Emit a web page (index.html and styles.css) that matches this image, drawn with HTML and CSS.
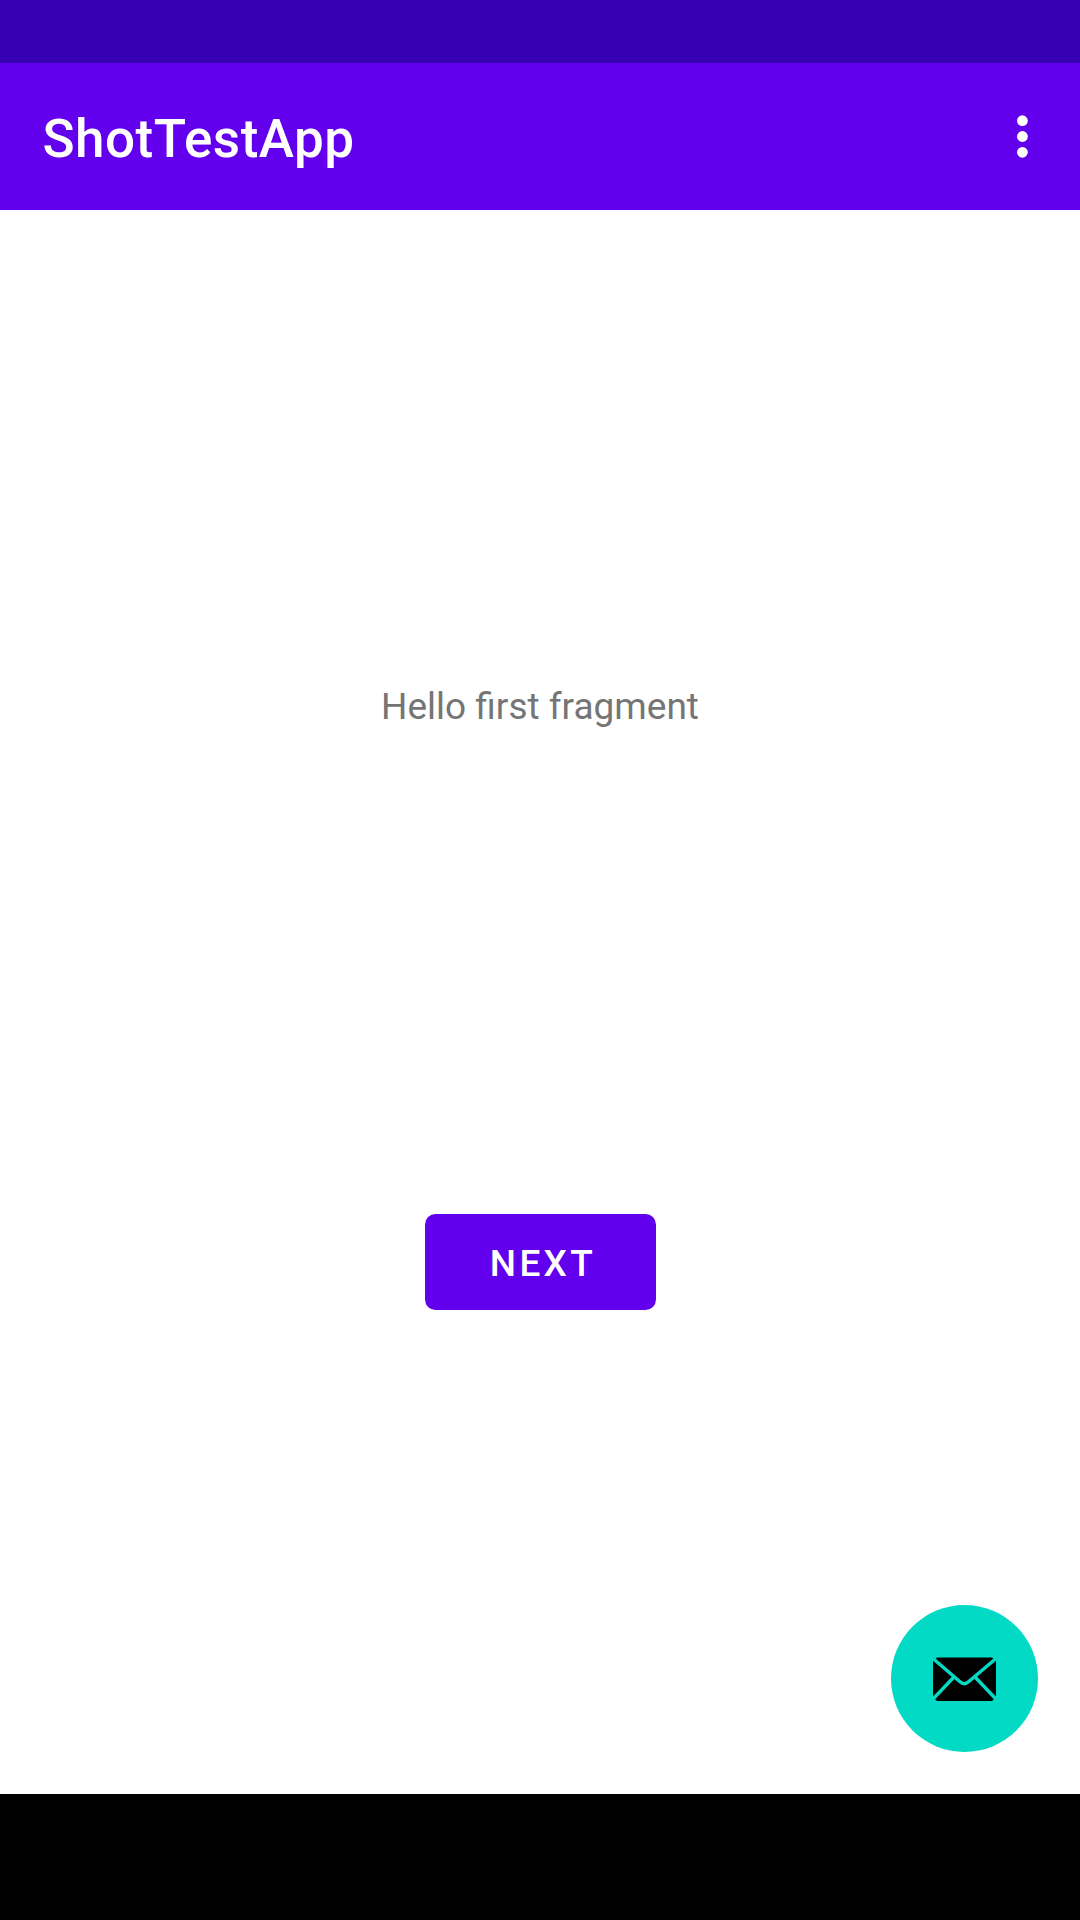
FILE: index.html
```html
<!DOCTYPE html>
<html lang="en">
<head>
<meta charset="utf-8">
<title>ShotTestApp</title>
<link rel="stylesheet" href="styles.css">
</head>
<body>
<div class="status-bar"></div>
<header class="toolbar">
  <h1 class="title">ShotTestApp</h1>
  <button class="overflow" aria-label="More options">
    <svg width="12" height="44" viewBox="0 0 12 44"><g fill="#fff"><circle cx="5.400" cy="5.700" r="5.400"/><circle cx="5.400" cy="21.500" r="5.400"/><circle cx="5.400" cy="37.300" r="5.400"/></g></svg>
  </button>
</header>
<main class="content">
  <p class="message">Hello first fragment</p>
  <button class="next">NEXT</button>
  <button class="fab" aria-label="Send mail">
    <svg width="63" height="44" viewBox="0 0 63 44"><path d="M4 .6H59L63 4V40L59 44H4L0 40V4Z"/><path d="M0 1.500L27 24.800Q31.300 28.500 35.500 24.800L63 1.500M0 42L20.500 20.500M63 42L42.500 20.500" fill="none" stroke="#03dac5" stroke-width="3.400"/></svg>
  </button>
</main>
<div class="nav-bar"></div>
</body>
</html>
```
FILE: styles.css
```css
* { box-sizing: border-box; }
body {
  margin: 0;
  height: 1920px;
  display: flex;
  flex-direction: column;
  background: #fff;
  font-family: Roboto, sans-serif;
}
button { border: 0; padding: 0; font-family: inherit; }
.status-bar { height: 63px; background: #3700b3; }
.toolbar {
  height: 147px;
  padding: 0 51px 0 42px;
  display: flex;
  align-items: center;
  justify-content: space-between;
  background: #6200ee;
}
.title { margin: 5px 0 0 0.4px; color: #fff; font-size: 53px; font-weight: 500; line-height: 62px; letter-spacing: 0.5px; }
.overflow { display: flex; background: none; }
.content {
  position: relative;
  flex: 1;
  display: flex;
  flex-direction: column;
  align-items: center;
}
.message { margin: 475px 0 0; color: #757575; font-size: 37px; line-height: 44px; }
.next {
  width: 231px;
  height: 96px;
  margin-top: 485px;
  padding: 3px 0 0 6px;
  border-radius: 10.5px;
  color: #fff;
  background: #6200ee;
  font-size: 37px;
  font-weight: 500;
  letter-spacing: 3.3px;
}
.fab {
  position: absolute;
  right: 42px;
  bottom: 42px;
  width: 147px;
  height: 147px;
  display: flex;
  align-items: center;
  justify-content: center;
  border-radius: 50%;
  background: #03dac5;
}
.nav-bar { height: 126px; background: #000; }
```
